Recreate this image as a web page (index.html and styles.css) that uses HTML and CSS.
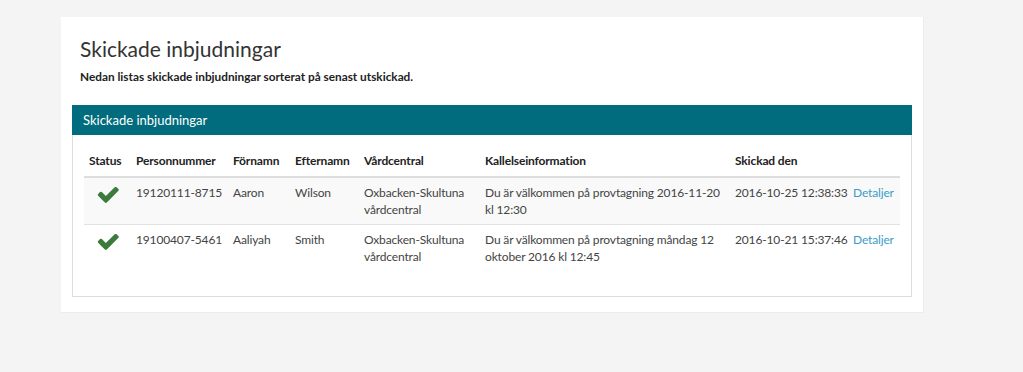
FILE: index.html
```html
<!DOCTYPE html>
<html lang="sv">
<head>
<meta charset="utf-8">
<title>Skickade inbjudningar</title>
<link rel="stylesheet" href="styles.css">
</head>
<body>
<div class="card">
  <div class="intro">
    <h1 class="title">Skickade inbjudningar</h1>
    <p class="lead">Nedan listas skickade inbjudningar sorterat på senast utskickad.</p>
  </div>
  <div class="panel">
    <div class="panel-head">Skickade inbjudningar</div>
    <div class="panel-body">
      <table class="grid">
        <colgroup>
          <col class="c-status"><col class="c-pnr"><col class="c-fn"><col class="c-en"><col class="c-vc"><col class="c-info"><col class="c-date"><col class="c-link">
        </colgroup>
        <thead>
          <tr>
            <th>Status</th><th>Personnummer</th><th>Förnamn</th><th>Efternamn</th><th>Vårdcentral</th><th>Kallelseinformation</th><th>Skickad den</th><th></th>
          </tr>
        </thead>
        <tbody>
          <tr class="odd">
            <td class="status"><svg class="check" viewBox="70 350 1610 1180"><path d="M1671 566q0 40-28 68l-724 724-136 136q-28 28-68 28t-68-28l-136-136-362-362q-28-28-28-68t28-68l136-136q28-28 68-28t68 28l294 295 656-657q28-28 68-28t68 28l136 136q28 28 28 68z"/></svg></td>
            <td class="nowrap">19120111-8715</td><td>Aaron</td><td>Wilson</td><td>Oxbacken-Skultuna vårdcentral</td><td>Du är välkommen på provtagning <span class="nowrap">2016-11-20</span> kl 12:30</td><td class="nowrap">2016-10-25 12:38:33</td><td><a class="link" href="#">Detaljer</a></td>
          </tr>
          <tr>
            <td class="status"><svg class="check" viewBox="70 350 1610 1180"><path d="M1671 566q0 40-28 68l-724 724-136 136q-28 28-68 28t-68-28l-136-136-362-362q-28-28-28-68t28-68l136-136q28-28 68-28t68 28l294 295 656-657q28-28 68-28t68 28l136 136q28 28 28 68z"/></svg></td>
            <td class="nowrap">19100407-5461</td><td>Aaliyah</td><td>Smith</td><td>Oxbacken-Skultuna vårdcentral</td><td>Du är välkommen på provtagning måndag 12 oktober 2016 kl 12:45</td><td class="nowrap">2016-10-21 15:37:46</td><td><a class="link" href="#">Detaljer</a></td>
          </tr>
        </tbody>
      </table>
    </div>
  </div>
</div>
</body>
</html>
```
FILE: styles.css
```css
html, body {
  margin: 0;
  padding: 0;
  background: #f4f4f4;
  font-family: Lato, "Open Sans", "Liberation Sans", sans-serif;
  color: #333;
}
.card {
  width: 840px;
  margin: 17px 0 0 61px;
  padding: 11px 11px 15px 11px;
  background: #fff;
  border: 1px solid #ececec;
  border-width: 0 1px 1px 0;
}
.intro {
  padding: 8px 0 0 8px;
}
.title {
  margin: 0;
  font-size: 21px;
  font-weight: 400;
  line-height: 26px;
  color: #333;
}
.lead {
  margin: 7px 0 20px 0;
  font-size: 11.8px;
  font-weight: 700;
  line-height: 16px;
  color: #222;
}
.panel {
  border: 1px solid #dcdcdc;
  border-top: 0;
}
.panel-head {
  background: #006c7d;
  color: #fff;
  font-size: 13px;
  line-height: 30px;
  height: 30px;
  padding: 0 11px;
  margin: 0 -1px;
}
.panel-body {
  padding: 12px 11px 25px 11px;
}
.grid {
  width: 816px;
  border-collapse: collapse;
  table-layout: fixed;
  font-size: 12px;
  letter-spacing: -0.15px;
}
.c-status { width: 47px; }
.c-pnr { width: 97px; }
.c-fn { width: 62px; }
.c-en { width: 69px; }
.c-vc { width: 121px; }
.c-info { width: 250px; }
.c-date { width: 118px; }
.c-link { width: 52px; }
.grid th {
  text-align: left;
  font-weight: 700;
  padding: 5px 5px 7px 5px;
  line-height: 17px;
  border-bottom: 2px solid #dedede;
  color: #222;
}
.grid td {
  padding: 6px 5px;
  line-height: 17px;
  vertical-align: top;
  border-bottom: 1px solid #e2e2e2;
  color: #444;
}
.grid tbody tr:last-child td {
  border-bottom: 0;
}
.grid tr.odd td {
  background: #f9f9f9;
}
.nowrap {
  white-space: nowrap;
}
.status {
  text-align: center;
}
.check {
  width: 22px;
  height: 16px;
  fill: #3b7b3b;
  margin-top: 3px;
  display: inline-block;
}
.link {
  color: #3a9cc8;
  text-decoration: none;
}
```
